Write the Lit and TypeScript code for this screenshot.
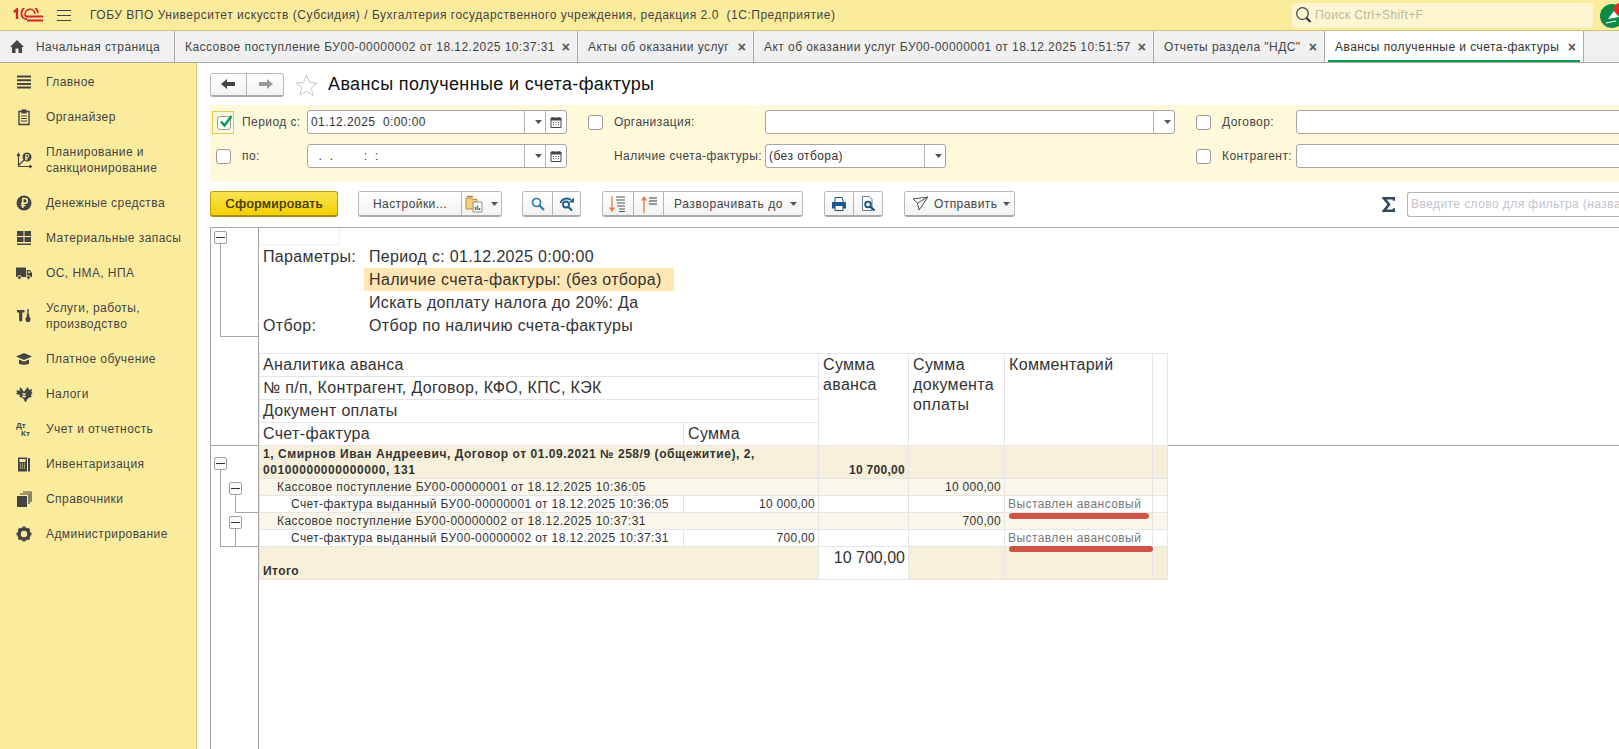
import { LitElement, html, css, svg } from "lit";
import { customElement } from "lit/decorators.js";

const ink = "#444";
const paper = "#fbec9d";

const menuIcons: Record<string, unknown> = {
  main: svg`<path d="M2 3.500h14M2 7.200h14M2 10.900h14M2 14.600h14" stroke=${ink} stroke-width="2" fill="none"/>`,
  org: svg`<path d="M4 3.500h10v13H4z" fill="none" stroke=${ink} stroke-width="1.400"/><path d="M7 2h4v3H7zM6 8h6M6 10.500h6M6 13h6" stroke=${ink} stroke-width="1.200" fill=${ink}/>`,
  plan: svg`<path d="M3.500 3v12.500M2 5l1.500-2.500L5 5M3.500 15.500h13M14.500 14l2 1.500-2 1.500M4 14l5-5" fill="none" stroke=${ink} stroke-width="1.200"/><circle cx="12" cy="6" r="4.500" fill=${ink}/><path d="M11 9.500V3.500h1.500a1.400 1.400 0 010 2.800H10M10 7.900h3" fill="none" stroke=${paper}/>`,
  money: svg`<circle cx="9" cy="9" r="7.500" fill=${ink}/><path d="M7.800 14V4.500h2.200a2.300 2.300 0 010 4.800H6M6 11.500h4.500" fill="none" stroke=${paper} stroke-width="1.500"/>`,
  stock: svg`<path d="M2 2h6.500v5H2zM9.500 2H16v5H9.500zM2 8h6.500v5H2zM9.500 8H16v5H9.500zM2 14.500h14V16H2z" fill=${ink}/>`,
  truck: svg`<path d="M1 3.500h10v9.500H1zM11.800 6H15l2 3v4h-5.200z" fill=${ink}/><path d="M13 7.200h1.500l1 1.800H13z" fill=${paper}/><circle cx="4.500" cy="13.500" r="1.900" fill=${ink} stroke=${paper}/><circle cx="13.500" cy="13.500" r="1.900" fill=${ink} stroke=${paper}/>`,
  tools: svg`<path d="M2 3h7.500v2.500H7.300v7.500a1.600 1.600 0 01-3.200 0V5.500H2z" fill=${ink}/><path d="M13 2v5" stroke=${ink} stroke-width="1.400"/><path d="M11.800 7h2.400v2.500a3 3 0 011.300 2.800c0 1.800-1.100 2.900-2.500 2.900s-2.500-1.100-2.500-2.900a3 3 0 011.300-2.800z" fill=${ink}/>`,
  study: svg`<path d="M1 6.500L9 3l8 3.500L9 10z" fill=${ink}/><path d="M4 9.500v4c2 1.700 8 1.700 10 0v-4l-5 2.200z" fill=${ink}/>`,
  tax: svg`<path d="M5 2l2 2 2 3 2-3 2-2 1 3 3-1-.5 3 1 1-1.500 2 .5 2-2.500.8-2 1.700-1 2.500h-1l-1-2.500-2-1.700-2.500-.8.5-2L1 9l1-1-.5-3 3 1z" fill=${ink}/><path d="M7 9h4M7 11.500h4M9 8v5" stroke=${paper}/>`,
  ledger: svg`<text x="1" y="8" font-size="8" font-weight="bold" letter-spacing="0" font-family="Liberation Sans" fill=${ink}>Дт</text><text x="6" y="16" font-size="8" font-weight="bold" letter-spacing="0" font-family="Liberation Sans" fill=${ink}>Кт</text>`,
  inv: svg`<path d="M3 2.500h9v14H3z" fill=${ink}/><path d="M4.500 4h6v3h-6z" fill=${paper}/><path d="M5 9h1M7 9h1M9 9h1M5 11h1M7 11h1M9 11h1M5 13h1M7 13h1M9 13h1" stroke=${paper}/><path d="M14 3v13.500" stroke=${ink} stroke-width="2"/>`,
  refs: svg`<path d="M2 6h10v11H2z" fill=${ink}/><path d="M5 4h9v10M8 2h8v10" fill="none" stroke=${ink} stroke-width="1.200"/>`,
  admin: svg`<circle cx="9" cy="9" r="5" fill="none" stroke=${ink} stroke-width="3.500"/><path d="M9 1.500v3M9 13.500v3M1.500 9h3M13.500 9h3M3.700 3.700l2.100 2.100M12.200 12.200l2.100 2.100M14.300 3.700l-2.100 2.100M5.800 12.200l-2.100 2.100" stroke=${ink} stroke-width="2.600"/>`,
};

const menu = [
  { icon: "main", label: "Главное" },
  { icon: "org", label: "Органайзер" },
  { icon: "plan", label: "Планирование и санкционирование", wrap: true },
  { icon: "money", label: "Денежные средства" },
  { icon: "stock", label: "Материальные запасы" },
  { icon: "truck", label: "ОС, НМА, НПА" },
  { icon: "tools", label: "Услуги, работы, производство", wrap: true },
  { icon: "study", label: "Платное обучение" },
  { icon: "tax", label: "Налоги" },
  { icon: "ledger", label: "Учет и отчетность" },
  { icon: "inv", label: "Инвентаризация" },
  { icon: "refs", label: "Справочники" },
  { icon: "admin", label: "Администрирование" },
];

const tabs = [
  { label: "Кассовое поступление БУ00-00000002 от 18.12.2025 10:37:31", width: 403 },
  { label: "Акты об оказании услуг", width: 176 },
  { label: "Акт об оказании услуг БУ00-00000001 от 18.12.2025 10:51:57", width: 400 },
  { label: "Отчеты раздела \"НДС\"", width: 171 },
  { label: "Авансы полученные и счета-фактуры", width: 259, active: true },
];

const caret = html`<svg class="caret" width="7" height="4" viewBox="0 0 7 4"><path d="M0 0h7L3.500 4z" fill="#555"/></svg>`;
const calendar = html`<svg width="12" height="12" viewBox="0 0 12 12"><path d="M1 2h10v9.500H1z" fill="#fff" stroke="#444"/><path d="M1 2h10v2.500H1z" fill="#444"/><path d="M3 1v2M9 1v2" stroke="#444"/><path d="M3 6.500h1M5.500 6.500h1M8 6.500h1M3 8.700h1M5.500 8.700h1M8 8.700h1" stroke="#444"/></svg>`;

@customElement("app-root")
export class AppRoot extends LitElement {
  static styles = css`
    :host {
      display: flex;
      flex-direction: column;
      width: 1619px;
      height: 749px;
      overflow: hidden;
      background: #fff;
      font-family: "Liberation Sans", Arial, sans-serif;
      font-size: 12px;
      letter-spacing: 0.43px;
      color: #444;
    }
    svg {
      display: block;
      flex: none;
    }

    /* title bar */
    .topbar {
      flex: none;
      height: 30px;
      display: flex;
      align-items: center;
      background: #fbec9d;
      border-bottom: 1px solid #d2c271;
      box-sizing: content-box;
    }
    .logo {
      margin-left: 13px;
    }
    .burger {
      margin-left: 14px;
    }
    .apptitle {
      margin-left: 19px;
      flex: 1;
      white-space: pre;
      letter-spacing: 0.515px;
      color: #444;
    }
    .search {
      width: 301px;
      height: 25px;
      margin-right: 7px;
      display: flex;
      align-items: center;
      gap: 3px;
      padding-left: 3px;
      box-sizing: border-box;
      background: #fdf6d0;
      border-radius: 3px;
      color: #bcb69f;
    }
    .bell {
      margin-right: -5px;
    }

    /* tabs */
    .tabs {
      flex: none;
      height: 31px;
      display: flex;
      background: #f0f0f0;
      border-bottom: 1px solid #a9a9a9;
      box-sizing: content-box;
      letter-spacing: 0.45px;
    }
    .home {
      width: 175px;
      display: flex;
      align-items: center;
      gap: 12px;
      padding-left: 10px;
      box-sizing: border-box;
      border-right: 1px solid #a9a9a9;
      white-space: nowrap;
    }
    .tab {
      position: relative;
      display: flex;
      align-items: center;
      justify-content: space-between;
      padding: 0 7px 0 10px;
      box-sizing: border-box;
      border-right: 1px solid #a9a9a9;
      white-space: nowrap;
    }
    .tab.active {
      background: #fff;
      color: #333;
    }
    .tab.active::after {
      content: "";
      position: absolute;
      left: 3px;
      right: 3px;
      bottom: 0;
      height: 2px;
      background: #0c9a4e;
    }
    .close {
      font-weight: bold;
      font-size: 14px;
      line-height: 14px;
      color: #555;
      letter-spacing: 0;
    }

    /* page body */
    .body {
      flex: 1;
      min-height: 0;
      display: flex;
    }
    .side {
      flex: none;
      width: 197px;
      box-sizing: border-box;
      padding-top: 1px;
      background: #fbec9d;
      border-right: 1px solid #d8c97e;
    }
    .item {
      display: flex;
      align-items: center;
      height: 35px;
      padding-left: 15px;
      gap: 13px;
      line-height: 16px;
    }
    .item.wrap {
      height: 51px;
    }
    .item span {
      width: 140px;
    }
    .main {
      flex: 1;
      min-width: 0;
      overflow: hidden;
      padding-top: 10px;
    }

    /* page heading */
    .heading {
      display: flex;
      align-items: center;
      height: 23px;
      margin-left: 13px;
    }
    .btn {
      display: flex;
      align-items: center;
      justify-content: center;
      box-sizing: border-box;
      height: 100%;
      background: linear-gradient(#fff, #f2f2f2);
      white-space: nowrap;
      color: #444;
    }
    .btn + .btn {
      border-left: 1px solid #b5b5b5;
    }
    .btn.wide {
      letter-spacing: 0.55px;
      padding-left: 5px;
    }
    .btn.send {
      flex: 1;
      justify-content: flex-start;
      gap: 5px;
      padding-left: 7px;
    }
    .btn.send .caret {
      margin-left: 1px;
    }
    .group {
      display: flex;
      height: 26px;
      box-sizing: border-box;
      border: 1px solid #b9b9b9;
      border-bottom: 2px solid #a9a9a9;
      border-radius: 3px;
      overflow: hidden;
    }
    .heading .group {
      height: 24px;
    }
    .star {
      margin-left: 11px;
    }
    h1 {
      margin: 0 0 0 10px;
      font-size: 18px;
      font-weight: normal;
      letter-spacing: 0.37px;
      color: #111;
      white-space: nowrap;
    }

    /* filters */
    .filters {
      margin: 9px 0 0 13px;
      padding: 5px 0 14px;
      display: grid;
      grid-template-columns: 32px 65px 260px 47px 151px 410px 47px 74px 401px;
      grid-auto-rows: 24px;
      row-gap: 10px;
      align-items: center;
      background: #fff9dc;
    }
    .cb {
      width: 15px;
      height: 15px;
      margin-left: 6px;
      box-sizing: border-box;
      background: #fff;
      border: 1px solid #9a9a9a;
      border-radius: 3px;
    }
    .cb.on {
      position: relative;
      width: 22px;
      height: 23px;
      margin-left: 2px;
      padding: 4px;
      background: none;
      border: 1px solid #e8c94e;
      border-radius: 0;
    }
    .cb.on i {
      display: block;
      width: 14px;
      height: 14px;
      box-sizing: border-box;
      background: #fff;
      border: 1px solid #9a9a9a;
      border-radius: 3px;
    }
    .cb.on svg {
      position: absolute;
      left: 5px;
      top: 2px;
    }
    .label {
      white-space: nowrap;
    }
    .cell-cb {
      padding-left: 15px;
    }
    .field {
      display: flex;
      height: 24px;
      box-sizing: border-box;
      background: #fff;
      border: 1px solid #a5a5a5;
      border-radius: 3px;
      overflow: hidden;
    }
    .field .value {
      flex: 1;
      padding-left: 3px;
      line-height: 22px;
      white-space: pre;
      color: #333;
    }
    .field .act {
      flex: none;
      width: 20px;
      display: flex;
      align-items: center;
      justify-content: center;
      border-left: 1px solid #b5b5b5;
    }
    .field.short {
      width: 181px;
    }

    /* toolbar */
    .toolbar {
      display: flex;
      align-items: center;
      height: 26px;
      margin: 9px 0 0 13px;
    }
    .make {
      width: 128px;
      height: 26px;
      box-sizing: border-box;
      margin-right: 20px;
      border: 1px solid #b89e14;
      border-bottom: 2px solid #a88f10;
      border-radius: 3px;
      display: flex;
      align-items: center;
      justify-content: center;
      background: linear-gradient(#fbe454, #f4d000);
      font-size: 13px;
      letter-spacing: 0.5px;
      color: #4a4200;
      text-shadow: 0.4px 0 0 #4a4200;
    }
    .gap20 {
      margin-left: 20px;
    }
    .gap21 {
      margin-left: 21px;
    }
    .caret {
      margin-left: 7px;
    }
    .sigma {
      margin-left: auto;
      margin-right: 12px;
    }
    .filter-input {
      width: 212px;
      height: 25px;
      box-sizing: border-box;
      padding-left: 3px;
      line-height: 23px;
      border: 1px solid #b3b3b3;
      border-right: 0;
      border-radius: 3px 0 0 3px;
      white-space: nowrap;
      overflow: hidden;
      color: #c3c3cb;
    }

    /* report */
    .report {
      margin: 10px 0 0 13px;
      height: 522px;
      border-top: 1px solid #a5a5a5;
      border-left: 1px solid #a5a5a5;
    }
    .band {
      display: flex;
    }
    .band.top {
      height: 217px;
      border-bottom: 1px solid #a5a5a5;
    }
    .gutter {
      flex: none;
      width: 47px;
      border-right: 1px solid #a5a5a5;
    }
    .report-head {
      flex: 1;
      min-width: 0;
    }
    .blank {
      width: 81px;
      height: 18px;
      box-sizing: border-box;
      border: 2px solid #f5f5f5;
      border-top: 0;
      border-left: 0;
    }
    .params {
      display: grid;
      grid-template-columns: 106px auto;
      justify-content: start;
      grid-auto-rows: 23px;
      margin-top: -1px;
      padding-left: 4px;
      font-size: 16px;
      letter-spacing: 0.34px;
      line-height: 23px;
      color: #333;
    }
    .params .mark {
      margin-left: -5px;
      padding: 0 12px 0 5px;
      background: #ffe6b3;
    }
    .hint {
      grid-column: 2;
    }
    table {
      border-collapse: collapse;
      table-layout: fixed;
      width: 908px;
      align-self: flex-start;
    }
    td {
      border: 1px solid #e5e5e5;
      padding: 0 3px;
      box-sizing: border-box;
      overflow: visible;
      white-space: nowrap;
    }
    .head {
      margin-top: 16px;
      font-size: 16px;
      letter-spacing: 0.33px;
      color: #333;
    }
    .head td {
      height: 23px;
      padding: 0 3px;
      line-height: 20px;
    }
    .head td.tall {
      vertical-align: top;
      padding: 1px 0 0 4px;
      white-space: normal;
    }
    .head td.sum {
      padding-left: 4px;
    }
    .data {
      color: #333;
    }
    .data td {
      height: 17px;
      line-height: 16px;
      vertical-align: middle;
    }
    .data tr:first-child td {
      border-top: 0;
    }
    .g td {
      background: #f6f0da;
    }
    .s td {
      background: #faf7ea;
    }
    .g .t {
      font-weight: bold;
      white-space: normal;
      line-height: 16px;
      letter-spacing: 0.56px;
      vertical-align: top;
    }
    .g td.b {
      vertical-align: bottom;
      font-weight: bold;
    }
    .num {
      text-align: right;
      padding-right: 3px;
      letter-spacing: 0.3px;
    }
    .i1 {
      padding-left: 17px;
    }
    .i2 {
      padding-left: 31px;
      letter-spacing: 0.38px;
    }
    .note {
      position: relative;
      color: #777;
    }
    .strike {
      position: absolute;
      left: 4px;
      height: 6px;
      border-radius: 3px;
      background: #cf5446;
    }
    .total td {
      height: 33px;
      background: #f6f0da;
    }
    .total .big {
      background: #fff;
      vertical-align: top;
      text-align: right;
      font-size: 16px;
      letter-spacing: 0;
      line-height: 22px;
      font-weight: normal;
    }
    .total .t {
      vertical-align: bottom;
      font-weight: bold;
    }
  `;

  private box(x: number, y: number) {
    return svg`<rect x=${x + 0.5} y=${y + 0.5} width="12" height="12" rx="1.500" fill="#fafafa" stroke="#a0a0a0"/><path d="M${x + 2} ${y + 6.5}h9" stroke="#333"/>`;
  }

  private side() {
    return html`<nav class="side">
      ${menu.map(
        (m) => html`<div class="item ${m.wrap ? "wrap" : ""}">
          <svg width="18" height="18" viewBox="0 0 18 18">${menuIcons[m.icon]}</svg>
          <span>${m.label}</span>
        </div>`,
      )}
    </nav>`;
  }

  private filters() {
    return html`<section class="filters">
      <div class="cb on">
        <i></i>
        <svg width="16" height="15" viewBox="0 0 16 15"><path d="M3 7.500l3.500 4L13.500 2" fill="none" stroke="#0c9a4e" stroke-width="2.500"/></svg>
      </div>
      <div class="label">Период с:</div>
      <div class="field">
        <div class="value">01.12.2025  0:00:00</div>
        <div class="act">${caret}</div>
        <div class="act">${calendar}</div>
      </div>
      <div class="cell-cb"><div class="cb"></div></div>
      <div class="label">Организация:</div>
      <div class="field">
        <div class="value"></div>
        <div class="act">${caret}</div>
      </div>
      <div class="cell-cb"><div class="cb"></div></div>
      <div class="label">Договор:</div>
      <div class="field"><div class="value"></div></div>

      <div class="cb"></div>
      <div class="label">по:</div>
      <div class="field">
        <div class="value">  .  .        :  :</div>
        <div class="act">${caret}</div>
        <div class="act">${calendar}</div>
      </div>
      <div></div>
      <div class="label">Наличие счета-фактуры:</div>
      <div class="field short">
        <div class="value">(без отбора)</div>
        <div class="act">${caret}</div>
      </div>
      <div class="cell-cb"><div class="cb"></div></div>
      <div class="label">Контрагент:</div>
      <div class="field"><div class="value"></div></div>
    </section>`;
  }

  private toolbar() {
    return html`<section class="toolbar">
      <div class="make">Сформировать</div>
      <div class="group" style="width:144px">
        <div class="btn" style="width:102px">Настройки...</div>
        <div class="btn" style="flex:1">
          <svg width="19" height="19" viewBox="0 0 19 19">
            <path d="M1 4h6l1 1.500h4V15H1z" fill="#f3cf7f" stroke="#b58b35"/>
            <path d="M2 2.500h6" stroke="#b58b35" stroke-width="1.500"/>
            <path d="M8 8h9v10H8z" fill="#fff" stroke="#8c8c8c"/>
            <path d="M10.500 16v-3" stroke="#d33" stroke-width="1.500"/>
            <path d="M12.500 16v-4.500" stroke="#2a9a4e" stroke-width="1.500"/>
            <path d="M14.500 16v-2" stroke="#2c6fb0" stroke-width="1.500"/>
          </svg>
          ${caret}
        </div>
      </div>
      <div class="group gap20" style="width:59px">
        <div class="btn" style="flex:1">
          <svg width="16" height="16" viewBox="0 0 16 16"><circle cx="6.500" cy="6.500" r="4" fill="none" stroke="#2c7cb0" stroke-width="1.700"/><path d="M9.500 9.500l4.500 4.500" stroke="#2c7cb0" stroke-width="2.200"/></svg>
        </div>
        <div class="btn" style="width:28px">
          <svg width="16" height="16" viewBox="0 0 16 16"><circle cx="7" cy="8.500" r="3" fill="none" stroke="#1c5f8f" stroke-width="1.800"/><path d="M9.500 11l3.500 3.500" stroke="#1c5f8f" stroke-width="2.200"/><path d="M1.500 7C2.500 3 8 1 12 4" fill="none" stroke="#1c5f8f" stroke-width="1.800"/><path d="M15 1.500v5h-5z" fill="#1c5f8f"/></svg>
        </div>
      </div>
      <div class="group gap21" style="width:201px">
        <div class="btn" style="width:30px">
          <svg width="20" height="20" viewBox="0 0 20 20"><path d="M4 2v13" stroke="#e8793a" stroke-width="1.300"/><path d="M1 13.500h6L4 18z" fill="#e8793a"/><path d="M8 3h9M8 6h9M9 9h8M9 12h8M11 15h6M11 17.500h6" stroke="#555"/></svg>
        </div>
        <div class="btn" style="width:30px">
          <svg width="20" height="20" viewBox="0 0 20 20"><path d="M5 6v13" stroke="#e8793a" stroke-width="1.300"/><path d="M2 6.500h6L5 2z" fill="#e8793a"/><path d="M10 4h8M10 7h8M10 10h8" stroke="#333" stroke-width="1.200"/></svg>
        </div>
        <div class="btn wide" style="flex:1">Разворачивать до ${caret}</div>
      </div>
      <div class="group gap21" style="width:59px">
        <div class="btn" style="flex:1">
          <svg width="16" height="16" viewBox="0 0 16 16"><path d="M4 1.500h7l1 3v2H4z" fill="#fff" stroke="#1d4f78"/><path d="M1 6h14v6.500H1z" fill="#1d5a8a"/><path d="M4 9.500h8v5H4z" fill="#fff" stroke="#1d4f78"/></svg>
        </div>
        <div class="btn" style="width:29px">
          <svg width="17" height="17" viewBox="0 0 17 17"><path d="M2.500 1.500H9l3 3v11H2.500z" fill="#fff" stroke="#5b7f9c"/><circle cx="8" cy="9.500" r="2.800" fill="none" stroke="#124f7c" stroke-width="1.800"/><path d="M10 11.500l4.500 4" stroke="#124f7c" stroke-width="2.200"/></svg>
        </div>
      </div>
      <div class="group gap21" style="width:111px">
        <div class="btn send">
          <svg width="17" height="17" viewBox="0 0 17 17"><path d="M1 4l15-2-9 13-1.500-7zM5.500 8L16 2" fill="none" stroke="#555"/></svg>
          <span>Отправить</span>${caret}
        </div>
      </div>
      <svg class="sigma" width="13" height="15" viewBox="0 0 13 15"><path d="M12 3.800V1.300H2l5 6.200-5 6.200h10v-2.500" fill="none" stroke="#34495e" stroke-width="2.600"/></svg>
      <div class="filter-input">Введите слово для фильтра (название показателя)</div>
    </section>`;
  }

  private reportHead() {
    return html`<div class="band top">
      <div class="gutter">
        <svg width="47" height="217" viewBox="0 0 47 217">
          <path d="M9.500 15V108.500H47" fill="none" stroke="#a5a5a5"/>
          ${this.box(3, 3)}
        </svg>
      </div>
      <div class="report-head">
        <div class="blank"></div>
        <div class="params">
          <div>Параметры:</div><div>Период с: 01.12.2025 0:00:00</div>
          <div class="hint mark">Наличие счета-фактуры: (без отбора)</div>
          <div class="hint">Искать доплату налога до 20%: Да</div>
          <div>Отбор:</div><div>Отбор по наличию счета-фактуры</div>
        </div>
        <table class="head">
          <colgroup>
            <col style="width:424px" /><col style="width:135px" /><col style="width:90px" />
            <col style="width:96px" /><col style="width:148px" /><col style="width:15px" />
          </colgroup>
          <tr>
            <td colspan="2">Аналитика аванса</td>
            <td class="tall" rowspan="4">Сумма аванса</td>
            <td class="tall" rowspan="4">Сумма документа оплаты</td>
            <td class="tall" rowspan="4">Комментарий</td>
            <td rowspan="4"></td>
          </tr>
          <tr><td colspan="2">№ п/п, Контрагент, Договор, КФО, КПС, КЭК</td></tr>
          <tr><td colspan="2">Документ оплаты</td></tr>
          <tr><td>Счет-фактура</td><td class="sum">Сумма</td></tr>
        </table>
      </div>
    </div>`;
  }

  private reportData() {
    return html`<div class="band">
      <div class="gutter" style="height:303px">
        <svg width="47" height="303" viewBox="0 0 47 303">
          <path d="M9.500 20V100.500H47M24.500 45V66.500H47M24.500 80V100" fill="none" stroke="#a5a5a5"/>
          ${this.box(3, 11)} ${this.box(18, 36)} ${this.box(18, 70)}
        </svg>
      </div>
      <table class="data">
        <colgroup>
          <col style="width:424px" /><col style="width:135px" /><col style="width:90px" />
          <col style="width:96px" /><col style="width:148px" /><col style="width:15px" />
        </colgroup>
        <tr class="g">
          <td class="t" colspan="2" style="height:32px">1, Смирнов Иван Андреевич, Договор от 01.09.2021 № 258/9 (общежитие), 2, 00100000000000000, 131</td>
          <td class="num b">10 700,00</td><td></td><td></td><td></td>
        </tr>
        <tr class="s">
          <td class="i1" colspan="2">Кассовое поступление БУ00-00000001 от 18.12.2025 10:36:05</td>
          <td></td><td class="num">10 000,00</td><td></td><td></td>
        </tr>
        <tr>
          <td class="i2">Счет-фактура выданный БУ00-00000001 от 18.12.2025 10:36:05</td>
          <td class="num">10 000,00</td><td></td><td></td>
          <td class="note">Выставлен авансовый<div class="strike" style="top:17px; width:140px"></div></td><td></td>
        </tr>
        <tr class="s">
          <td class="i1" colspan="2">Кассовое поступление БУ00-00000002 от 18.12.2025 10:37:31</td>
          <td></td><td class="num">700,00</td><td></td><td></td>
        </tr>
        <tr>
          <td class="i2">Счет-фактура выданный БУ00-00000002 от 18.12.2025 10:37:31</td>
          <td class="num">700,00</td><td></td><td></td>
          <td class="note">Выставлен авансовый<div class="strike" style="top:16px; width:144px"></div></td><td></td>
        </tr>
        <tr class="total">
          <td class="t" colspan="2">Итого</td>
          <td class="big">10 700,00</td><td></td><td></td><td></td>
        </tr>
      </table>
    </div>`;
  }

  render() {
    return html`
      <header class="topbar">
        <svg class="logo" width="30" height="14" viewBox="0 0 30 14">
          <path d="M1 4l3-2.500V11" fill="none" stroke="#d8222a" stroke-width="2.400"/>
          <path d="M25 5A6.500 6.500 0 0 0 8.500 6.500 5 5 0 0 0 14 11" fill="none" stroke="#d8222a" stroke-width="1.800"/>
          <path d="M22 6A3.500 3.500 0 0 0 12 6.500c0 1.500 1 2 2 2" fill="none" stroke="#d8222a" stroke-width="1.500"/>
          <path d="M13 8.500h17M14 12.500h16" stroke="#d8222a" stroke-width="1.800"/>
        </svg>
        <svg class="burger" width="14" height="11" viewBox="0 0 14 11"><path d="M0 .5h14M0 5.500h14M0 10.500h14" stroke="#444"/></svg>
        <div class="apptitle">ГОБУ ВПО Университет искусств (Субсидия) / Бухгалтерия государственного учреждения, редакция 2.0  (1С:Предприятие)</div>
        <div class="search">
          <svg width="17" height="18" viewBox="0 0 17 18"><circle cx="7.500" cy="7.500" r="5.800" fill="none" stroke="#444" stroke-width="1.300"/><path d="M11.500 12l4 4" stroke="#333" stroke-width="2.200"/></svg>
          <span>Поиск Ctrl+Shift+F</span>
        </div>
        <svg class="bell" width="24" height="25" viewBox="0 0 24 25">
          <circle cx="12" cy="13" r="12" fill="#0d8a45"/>
          <path d="M8 16l6-8 5 6z" fill="#fff"/>
          <path d="M6 20l10-2" stroke="#fff"/>
          <circle cx="20" cy="6" r="6" fill="#e8252b"/>
        </svg>
      </header>
      <div class="tabs">
        <div class="home">
          <svg width="14" height="13" viewBox="0 0 14 13"><path d="M7 0L0 7h2v6h3.500V8.500h3V13H12V7h2z" fill="#444"/></svg>
          <span>Начальная страница</span>
        </div>
        ${tabs.map(
          (t) => html`<div class="tab ${t.active ? "active" : ""}" style="width:${t.width}px">
            <span>${t.label}</span><span class="close">×</span>
          </div>`,
        )}
      </div>
      <div class="body">
        ${this.side()}
        <main class="main">
          <div class="heading">
            <div class="group" style="width:74px">
              <div class="btn" style="flex:1">
                <svg width="15" height="12" viewBox="0 0 15 12"><path d="M0 6l6-5v3h8v4H6v3z" fill="#444"/></svg>
              </div>
              <div class="btn" style="width:37px">
                <svg width="15" height="12" viewBox="0 0 15 12"><path d="M15 6L9 1v3H1v4h8v3z" fill="#9a9a9a"/></svg>
              </div>
            </div>
            <svg class="star" width="23" height="22" viewBox="0 0 23 22"><path d="M11.500 1l3 7.500 7.500.6-5.800 4.900 2 7.500-6.700-4.300L4.800 21l2-7.500L1 9.100l7.500-.6z" fill="#fff" stroke="#c8c8c8"/></svg>
            <h1>Авансы полученные и счета-фактуры</h1>
          </div>
          ${this.filters()} ${this.toolbar()}
          <section class="report">${this.reportHead()} ${this.reportData()}</section>
        </main>
      </div>
    `;
  }
}
